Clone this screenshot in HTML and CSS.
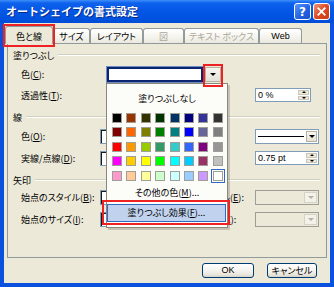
FILE: index.html
```html
<!DOCTYPE html>
<html lang="ja">
<head>
<meta charset="utf-8">
<title>オートシェイプの書式設定</title>
<link rel="stylesheet" href="styles.css">
</head>
<body>
<div class="window">
  <div class="titlebar">
    <span class="title">オートシェイプの書式設定</span>
    <span class="cap-btn cap-help">?</span>
    <span class="cap-btn cap-close"><svg viewBox="0 0 10 10" width="9" height="9"><path d="M1.5 1.5 L8.5 8.5 M8.5 1.5 L1.5 8.5" stroke="#fff" stroke-width="2" stroke-linecap="square"/></svg></span>
  </div>
  <div class="client">
    <div class="tabs">
      <div class="tab tab-sel">色と線</div>
      <div class="tab tab-size">サイズ</div>
      <div class="tab tab-layout">レイアウト</div>
      <div class="tab tab-pic tab-dis">図</div>
      <div class="tab tab-text tab-dis">テキスト ボックス</div>
      <div class="tab tab-web">Web</div>
    </div>
    <div class="panel">
      <div class="group"><span>塗りつぶし</span><span class="group-line"></span></div>
      <div class="row sp3">
        <span class="label">色(<u>C</u>):</span>
        <div class="combo-fill"><span class="field-sel"></span><span class="drop"><i class="tri"></i></span></div>
      </div>
      <div class="row sp5">
        <span class="label">透過性(<u>T</u>):</span>
        <div class="slider"><span class="track"></span></div>
        <div class="spin spin-narrow"><span class="spin-text">0 %</span><span class="spin-btns"><span class="spin-b"><i class="tri-up"></i></span><span class="spin-b"><i class="tri-dn"></i></span></span></div>
      </div>
      <div class="group sp6"><span>線</span><span class="group-line"></span></div>
      <div class="row sp3">
        <span class="label">色(<u>O</u>):</span>
        <div class="lcombo"></div>
        <span class="rlabel">スタイル(<u>S</u>):</span>
        <div class="linecombo"><span class="line-sample"><i class="line"></i></span><span class="drop drop-s"><i class="tri"></i></span></div>
      </div>
      <div class="row sp6">
        <span class="label">実線/点線(<u>D</u>):</span>
        <div class="lcombo"></div>
        <span class="rlabel">太さ(<u>W</u>):</span>
        <div class="spin spin-wide"><span class="spin-text">0.75 pt</span><span class="spin-btns"><span class="spin-b"><i class="tri-up"></i></span><span class="spin-b"><i class="tri-dn"></i></span></span></div>
      </div>
      <div class="group sp6"><span>矢印</span><span class="group-line"></span></div>
      <div class="row sp1">
        <span class="label">始点のスタイル(<u>B</u>):</span>
        <div class="lcombo"></div>
        <span class="rlabel">終点のスタイル(<u>E</u>):</span>
        <div class="dcombo"><span class="drop drop-d"><i class="tri tri-d"></i></span></div>
      </div>
      <div class="row sp6">
        <span class="label">始点のサイズ(<u>I</u>):</span>
        <div class="lcombo"></div>
        <span class="rlabel">終点のサイズ(<u>Z</u>):</span>
        <div class="dcombo"><span class="drop drop-d"><i class="tri tri-d"></i></span></div>
      </div>
    </div>
    <div class="actions">
      <button class="btn btn-ok">OK</button>
      <button class="btn btn-cancel">キャンセル</button>
    </div>

    <div class="popup">
      <div class="pop-none">塗りつぶしなし</div>
      <div class="swatches">
        <span></span><span></span><span></span><span></span><span></span><span></span><span></span><span></span>
        <span></span><span></span><span></span><span></span><span></span><span></span><span></span><span></span>
        <span></span><span></span><span></span><span></span><span></span><span></span><span></span><span></span>
        <span></span><span></span><span></span><span></span><span></span><span></span><span></span><span></span>
        <span></span><span></span><span></span><span></span><span></span><span></span><span></span><span class="sw-sel"></span>
      </div>
      <div class="pop-more">その他の色(<u>M</u>)...</div>
      <div class="pop-fx">塗りつぶし効果(<u>F</u>)...</div>
    </div>
  </div>

  <div class="mark mark-tab"></div>
  <div class="mark mark-drop"></div>
  <div class="mark mark-fx"></div>
</div>
</body>
</html>
```

FILE: styles.css
```css
* { box-sizing: border-box; }
html, body { margin: 0; padding: 0; }
body {
  background: #fff;
  font-family: "Noto Sans CJK JP", "Noto Sans", sans-serif;
  font-size: 9px;
  color: #000;
  font-feature-settings: "palt";
  line-height: 1;
}
u { text-decoration: underline; text-underline-offset: 1px; }

.window {
  position: relative;
  width: 334px;
  height: 287px;
  background: #0A52DE;
  display: flex;
  flex-direction: column;
  overflow: hidden;
}

/* title bar */
.titlebar {
  height: 23px;
  flex: none;
  display: flex;
  align-items: center;
  padding: 0 4px 0 6px;
  background: linear-gradient(#3D8EF9 0, #0F62EC 3px, #0458E6 10px, #0052E0 18px, #004DD6 23px);
}
.title {
  flex: 1;
  color: #fff;
  font-size: 11px;
  font-weight: bold;
  font-feature-settings: normal;
  white-space: nowrap;
  text-shadow: 1px 1px 0 #0A2A8C;
}
.cap-btn {
  width: 17px;
  height: 17px;
  border: 1px solid #fff;
  border-radius: 3px;
  display: flex;
  align-items: center;
  justify-content: center;
  color: #fff;
}
.cap-help {
  margin-right: 2px;
  font-family: "DejaVu Sans", sans-serif;
  font-weight: bold;
  font-size: 12px;
  background: linear-gradient(135deg, #5A97FA, #2463E2 55%, #1B50CF);
}
.cap-close {
  background: linear-gradient(135deg, #EE9478, #DD4B24 50%, #C93B13);
}

/* client area */
.client {
  position: relative;
  flex: 1;
  margin: 0 4px 4px;
  background: #ECE9D8;
  display: flex;
  flex-direction: column;
}

/* tabs */
.tabs {
  display: flex;
  align-items: flex-end;
  height: 18px;
  margin: 3px 0 -1px 1px;
  position: relative;
  z-index: 1;
}
.tab {
  height: 15px;
  margin-bottom: 1px;
  border: 1px solid #919B9C;
  border-bottom: none;
  border-radius: 3px 3px 0 0;
  background: linear-gradient(#FFFFFF, #F5F4EF 55%, #EAE8DE);
  display: flex;
  align-items: center;
  justify-content: center;
  white-space: nowrap;
}
.tab-sel {
  width: 48px;
  height: 18px;
  margin-bottom: 0;
  background: #ECE9D8;
  padding-top: 1px;
}
.tab-size { width: 37px; }
.tab-layout { width: 53px; }
.tab-pic { width: 41px; }
.tab-text { width: 75px; }
.tab-web { width: 43px; font-family: "Liberation Sans", sans-serif; }
.tab-dis { color: #ACA899; }

/* page */
.panel {
  flex: none;
  height: 215px;
  margin: 0 3px;
  border: 1px solid #919B9C;
  padding-top: 3px;
}
.group {
  display: flex;
  align-items: center;
  height: 16px;
  padding: 0 6px 0 5px;
}
.group-line {
  flex: 1;
  margin-left: 4px;
  height: 2px;
  border-top: 1px solid #D0D0BF;
  border-bottom: 1px solid #fff;
}
.row {
  display: flex;
  align-items: center;
  height: 16px;
  padding-left: 13px;
}
.sp1 { margin-top: 1px; }
.sp3 { margin-top: 3px; }
.sp5 { margin-top: 5px; }
.sp6 { margin-top: 6px; }

.label { width: 79px; flex: none; white-space: nowrap; }
.rlabel { width: 84px; margin-left: 3px; flex: none; white-space: nowrap; }

/* controls */
.combo-fill {
  display: flex;
  gap: 2px;
  width: 114px;
  height: 15px;
  margin-left: 7px;
}
.field-sel {
  flex: 1;
  border: 2px solid #0B2470;
  background: #fff;
  box-shadow: 0 0 0 1px #6F8DC2;
}
.drop {
  width: 16px;
  display: flex;
  align-items: center;
  justify-content: center;
  background: linear-gradient(#F7F6F1, #E4E2D7);
  border: 1px solid #B5B2A2;
}
.tri {
  width: 0;
  height: 0;
  border-left: 3px solid transparent;
  border-right: 3px solid transparent;
  border-top: 3px solid #000;
}
.tri-d { border-top-color: #B4B1A3; }
.drop-s { width: 11px; }
.drop-d { width: 13px; border-color: #D6D3C6; background: #F2F1EA; }

.slider {
  width: 118px;
  height: 14px;
  margin: 0 30px 0 7px;
  display: flex;
  align-items: center;
}
.track { flex: 1; height: 3px; border: 1px solid #9D9B8E; background: #fff; }

.spin {
  display: flex;
  height: 14px;
  border: 1px solid #7F9DB9;
  background: #fff;
  padding: 1px;
}
.spin-narrow { width: 56px; }
.spin-wide { width: 64px; }
.spin-text { flex: 1; padding-left: 1px; display: flex; align-items: center; font-family: "Liberation Sans", sans-serif; font-size: 9px; }
.spin-btns { width: 11px; display: flex; flex-direction: column; gap: 1px; }
.spin-b {
  flex: 1;
  display: flex;
  align-items: center;
  justify-content: center;
  background: #ECE9D8;
  border: 1px solid #C9C6B6;
}
.tri-up, .tri-dn {
  width: 0;
  height: 0;
  border-left: 2px solid transparent;
  border-right: 2px solid transparent;
}
.tri-up { border-bottom: 2px solid #000; }
.tri-dn { border-top: 2px solid #000; }

.lcombo {
  width: 68px;
  height: 15px;
  flex: none;
  border: 1px solid #7F9DB9;
  background: #fff;
  box-shadow: inset 1px 1px 0 #1A1A1A;
}
.linecombo {
  display: flex;
  width: 64px;
  height: 15px;
  border: 1px solid #7F9DB9;
  background: #fff;
  padding: 1px;
}
.line-sample { flex: 1; display: flex; align-items: center; padding: 0 2px 0 1px; }
.line { flex: 1; height: 1px; background: #000; }

.dcombo {
  display: flex;
  justify-content: flex-end;
  width: 64px;
  height: 15px;
  border: 1px solid #9F9E95;
  background: #ECE9D8;
  padding: 1px;
}

/* buttons */
.actions {
  display: flex;
  justify-content: flex-end;
  gap: 13px;
  padding-right: 13px;
  margin-top: 5px;
}
.btn {
  height: 15px;
  padding: 0;
  border: 1px solid #003C74;
  border-radius: 3px;
  background: linear-gradient(#FFFFFF, #F4F3EE 50%, #E6E4DA 85%, #D6D0C5);
  font: inherit;
  color: #000;
  display: flex;
  align-items: center;
  justify-content: center;
}
.btn-ok { width: 52px; font-family: "Liberation Sans", sans-serif; }
.btn-cancel { width: 50px; }

/* color dropdown */
.popup {
  position: absolute;
  left: 102px;
  top: 60px;
  width: 122px;
  height: 145px;
  border: 1px solid #8A877A;
  background: #FCFCF9;
  box-shadow: 2px 2px 0 rgba(0, 0, 0, 0.16);
  display: flex;
  flex-direction: column;
  z-index: 2;
}
.pop-none {
  height: 24px;
  margin-top: 2px;
  display: flex;
  align-items: center;
  justify-content: center;
}
.swatches {
  display: grid;
  grid-template-columns: repeat(8, 10px);
  grid-auto-rows: 10px;
  column-gap: 4.4px;
  row-gap: 4.4px;
  margin: 3px 0 0 5px;
}
.swatches span { border: 1px solid #A09E96; }
.swatches span:nth-child(1) { background: #000000; }
.swatches span:nth-child(2) { background: #993300; }
.swatches span:nth-child(3) { background: #333300; }
.swatches span:nth-child(4) { background: #003300; }
.swatches span:nth-child(5) { background: #003366; }
.swatches span:nth-child(6) { background: #000080; }
.swatches span:nth-child(7) { background: #333399; }
.swatches span:nth-child(8) { background: #333333; }
.swatches span:nth-child(9) { background: #800000; }
.swatches span:nth-child(10) { background: #FF6600; }
.swatches span:nth-child(11) { background: #808000; }
.swatches span:nth-child(12) { background: #008000; }
.swatches span:nth-child(13) { background: #008080; }
.swatches span:nth-child(14) { background: #0000FF; }
.swatches span:nth-child(15) { background: #666699; }
.swatches span:nth-child(16) { background: #808080; }
.swatches span:nth-child(17) { background: #FF0000; }
.swatches span:nth-child(18) { background: #FF9900; }
.swatches span:nth-child(19) { background: #99CC00; }
.swatches span:nth-child(20) { background: #339966; }
.swatches span:nth-child(21) { background: #33CCCC; }
.swatches span:nth-child(22) { background: #3366FF; }
.swatches span:nth-child(23) { background: #800080; }
.swatches span:nth-child(24) { background: #969696; }
.swatches span:nth-child(25) { background: #FF00FF; }
.swatches span:nth-child(26) { background: #FFCC00; }
.swatches span:nth-child(27) { background: #FFFF00; }
.swatches span:nth-child(28) { background: #00FF00; }
.swatches span:nth-child(29) { background: #00FFFF; }
.swatches span:nth-child(30) { background: #00CCFF; }
.swatches span:nth-child(31) { background: #993366; }
.swatches span:nth-child(32) { background: #C0C0C0; }
.swatches span:nth-child(33) { background: #FF99CC; }
.swatches span:nth-child(34) { background: #FFCC99; }
.swatches span:nth-child(35) { background: #FFFF99; }
.swatches span:nth-child(36) { background: #CCFFCC; }
.swatches span:nth-child(37) { background: #CCFFFF; }
.swatches span:nth-child(38) { background: #99CCFF; }
.swatches span:nth-child(39) { background: #CC99FF; }
.swatches span:nth-child(40) { background: #FFFFFF; }
.swatches .sw-sel { outline: 1px solid #316AC5; outline-offset: 1px; }

.pop-more {
  height: 20px;
  margin-top: 2px;
  display: flex;
  align-items: center;
  justify-content: center;
}
.pop-fx {
  height: 18px;
  margin: 1px 1px 0 0;
  border: 1px solid #316AC5;
  background: #C1D2EE;
  display: flex;
  align-items: center;
  justify-content: center;
}

/* red highlight frames */
.mark {
  position: absolute;
  border: 2px solid #EE2222;
  z-index: 5;
}
.mark-tab { left: 3px; top: 24px; width: 52px; height: 23px; }
.mark-drop { left: 203px; top: 64px; width: 20px; height: 23px; }
.mark-fx { left: 102px; top: 200px; width: 128px; height: 25px; }
```
